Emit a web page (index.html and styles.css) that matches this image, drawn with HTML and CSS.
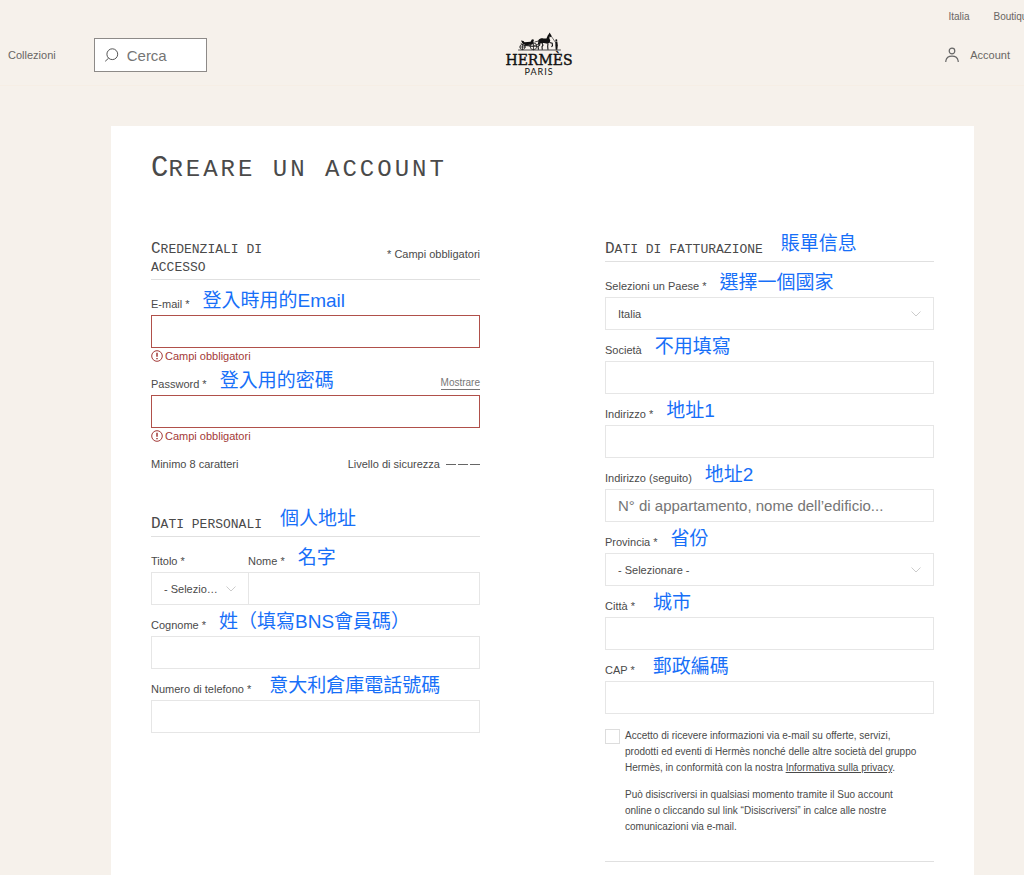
FILE: index.html
```html
<!DOCTYPE html>
<html lang="it">
<head>
    <meta charset="UTF-8">
    <meta name="viewport" content="width=device-width, initial-scale=1.0">
    <title>Creare un account</title>
    <link rel="stylesheet" href="styles.css">
</head>
<body>

    <header class="header">
        <nav class="top-links">
            <a href="#">Italia</a>
            <a href="#">Boutique</a>
        </nav>

        <div class="header-main">
            <div class="header-left">
                <a href="#">Collezioni</a>
                <label class="search">
                    <svg width="15" height="15" viewBox="0 0 15 15" fill="none" stroke="#555"><circle cx="8.3" cy="6.2" r="5.400"/><path d="M4.600 10.200 1.200 13.300"/></svg>
                    <input type="search" placeholder="Cerca" aria-label="Cerca">
                </label>
            </div>

            <a class="logo" href="#" aria-label="Hermès Paris">
                <svg width="70" height="46" viewBox="0 0 70 46">
                    <!-- carrozza -->
                    <g fill="none" stroke="#222" stroke-width="0.8" stroke-linecap="round">
                        <circle cx="18.500" cy="15" r="2.600"/>
                        <circle cx="29.500" cy="14.300" r="3.400"/>
                        <path d="M18.500 12.400v5.200M15.900 15h5.200M29.500 10.900v6.800M26.100 14.300h6.800"/>
                        <path d="M17 11.500l3 2h6M21 13.500l8 .8 7-3M14.500 18h42"/>
                        <path d="M31 10l5-1.500"/>
                    </g>
                    <path fill="#111" d="M17 8.500l2.500.5 1 1.200 6-.4 1.500-2.600 2 .6-1.400 4.600-7.100.8-3-1.700z"/>
                    <!-- cavallo -->
                    <path fill="#111" d="M34.500 8c1-1.600 3-1.900 5-1.600l3 .2 1.200-3.200 1.300-1.700.3-1.200.9 1 1.600 2.700-.8 1-1.400-.8-.2 2.200.9 1.800-.6 2.200-2.200 1.200-3.700-.8-3 .3-1.300-.5-.7 2-.9-.3z"/>
                    <path fill="none" stroke="#111" stroke-width="1.100" d="M36 10.500l-.3 2.500-1.700 1.700.5 3M37.800 10.500l1.200 2.600-1 1.600.3 3M44 11.500l-.3 3 .3 3.200M45.500 10.500l2.700.8.3 2.300-1 1.200"/>
                    <!-- palafreniere -->
                    <circle cx="52.300" cy="8.300" r="1" fill="#111"/>
                    <path fill="#111" d="M51.300 9.600h2l.5 3.600-.5 4.600h-1.600l-.3-4.400z"/>
                    <path fill="none" stroke="#222" stroke-width="0.600" d="M47.500 4.500l4 6"/>
                    <text class="logo-name" x="35" y="33" text-anchor="middle">HERMÈS</text>
                    <text class="logo-city" x="35" y="43" text-anchor="middle">PARIS</text>
                </svg>
            </a>

            <a class="account" href="#">
                <svg width="14" height="16" viewBox="0 0 14 16" fill="none" stroke="#666" stroke-width="1.200"><circle cx="7" cy="4" r="2.800"/><path d="M.8 15v-1C1.300 11 3.800 9.200 7 9.200s5.700 1.800 6.200 4.800v1"/></svg>
                Account
            </a>
        </div>
    </header>

    <main class="card">
        <h1>Creare un account</h1>

        <form class="columns">
            <div>
                <!-- credenziali -->
                <section class="section">
                    <div class="section-head">
                        <h2>Credenziali di accesso</h2>
                        <p class="required">* Campi obbligatori</p>
                    </div>
                    <div class="field error">
                        <div class="field-head">
                            <label for="email">E-mail *</label>
                            <span class="note">登入時用的Email</span>
                        </div>
                        <input type="email" id="email">
                        <p class="message">
                            <svg width="12" height="12" viewBox="0 0 12 12" fill="none" stroke="currentColor"><circle cx="6" cy="6" r="5.300"/><path stroke-width="1.500" d="M6 2.800v4M6 8v1.300"/></svg>
                            Campi obbligatori
                        </p>
                    </div>
                    <div class="field error">
                        <div class="field-head">
                            <label for="password">Password *</label>
                            <span class="note">登入用的密碼</span>
                            <button type="button" class="show">Mostrare</button>
                        </div>
                        <input type="password" id="password">
                        <p class="message">
                            <svg width="12" height="12" viewBox="0 0 12 12" fill="none" stroke="currentColor"><circle cx="6" cy="6" r="5.300"/><path stroke-width="1.500" d="M6 2.800v4M6 8v1.300"/></svg>
                            Campi obbligatori
                        </p>
                    </div>
                    <div class="hint">
                        <span>Minimo 8 caratteri</span>
                        <span class="security">Livello di sicurezza <i></i><i></i><i></i></span>
                    </div>
                </section>

                <!-- dati personali -->
                <section class="section">
                    <div class="section-head">
                        <h2>Dati personali</h2>
                        <span class="note">個人地址</span>
                    </div>
                    <div class="name-row">
                        <div class="field">
                            <div class="field-head"><label for="titolo">Titolo *</label></div>
                            <select id="titolo"><option>- Selezionare -</option></select>
                        </div>
                        <div class="field">
                            <div class="field-head">
                                <label for="nome">Nome *</label>
                                <span class="note">名字</span>
                            </div>
                            <input type="text" id="nome">
                        </div>
                    </div>
                    <div class="field">
                        <div class="field-head">
                            <label for="cognome">Cognome *</label>
                            <span class="note">姓（填寫BNS會員碼）</span>
                        </div>
                        <input type="text" id="cognome">
                    </div>
                    <div class="field">
                        <div class="field-head wide">
                            <label for="telefono">Numero di telefono *</label>
                            <span class="note">意大利倉庫電話號碼</span>
                        </div>
                        <input type="tel" id="telefono">
                    </div>
                </section>
            </div>

            <div>
                <!-- fatturazione -->
                <section class="section billing">
                    <div class="section-head">
                        <h2>Dati di fatturazione</h2>
                        <span class="note">賬單信息</span>
                    </div>
                    <div class="field">
                        <div class="field-head">
                            <label for="paese">Selezioni un Paese *</label>
                            <span class="note">選擇一個國家</span>
                        </div>
                        <select id="paese"><option>Italia</option></select>
                    </div>
                    <div class="field">
                        <div class="field-head">
                            <label for="societa">Società</label>
                            <span class="note">不用填寫</span>
                        </div>
                        <input type="text" id="societa">
                    </div>
                    <div class="field">
                        <div class="field-head">
                            <label for="indirizzo">Indirizzo *</label>
                            <span class="note">地址1</span>
                        </div>
                        <input type="text" id="indirizzo">
                    </div>
                    <div class="field">
                        <div class="field-head">
                            <label for="indirizzo2">Indirizzo (seguito)</label>
                            <span class="note">地址2</span>
                        </div>
                        <input type="text" id="indirizzo2" placeholder="N° di appartamento, nome dell’edificio...">
                    </div>
                    <div class="field">
                        <div class="field-head">
                            <label for="provincia">Provincia *</label>
                            <span class="note">省份</span>
                        </div>
                        <select id="provincia"><option>- Selezionare -</option></select>
                    </div>
                    <div class="field">
                        <div class="field-head wide">
                            <label for="citta">Città *</label>
                            <span class="note">城市</span>
                        </div>
                        <input type="text" id="citta">
                    </div>
                    <div class="field">
                        <div class="field-head wide">
                            <label for="cap">CAP *</label>
                            <span class="note">郵政編碼</span>
                        </div>
                        <input type="text" id="cap">
                    </div>
                    <div class="consent">
                        <input type="checkbox" id="consent">
                        <div>
                            <p><label for="consent">Accetto di ricevere informazioni via e-mail su offerte, servizi, prodotti ed eventi di Hermès nonché delle altre società del gruppo Hermès, in conformità con la nostra</label> <a href="#">Informativa sulla privacy</a>.</p>
                            <p>Può disiscriversi in qualsiasi momento tramite il Suo account online o cliccando sul link “Disiscriversi” in calce alle nostre comunicazioni via e-mail.</p>
                        </div>
                    </div>
                </section>
            </div>
        </form>
    </main>

</body>
</html>
```

FILE: styles.css
```css
* { box-sizing: border-box; }
body { margin: 0; background: #f6f1eb; color: #4a4a4a; font: 11px/16px "Liberation Sans", "Noto Sans CJK TC", sans-serif; overflow-x: hidden; }
h1, h2, p { margin: 0; font-weight: normal; }
a { color: inherit; text-decoration: none; }

/* header */
.header { color: #696663; border-bottom: 1px solid #f6eee5; }
.top-links { display: flex; justify-content: flex-end; gap: 24px; padding-top: 9px; margin-right: -9px; font-size: 10px; white-space: nowrap; }
.header-main { display: grid; grid-template-columns: 1fr auto 1fr; align-items: center; height: 60px; padding: 0 14px 0 8px; }
.header-left { display: flex; align-items: center; gap: 38px; }
.search { display: flex; align-items: center; gap: 8px; width: 113px; height: 34px; padding: 0 9px; background: #fff; border: 1px solid #8d8a88; }
.search svg { flex: none; }
.search input { width: 100%; min-width: 0; padding: 0; border: 0; outline: 0; background: none; font: 15px "Liberation Sans", sans-serif; }
.logo { padding-left: 59px; }
.logo svg { display: block; }
.logo-name { font: 14px "DejaVu Serif", serif; fill: #111; stroke: #111; stroke-width: 0.4px; }
.logo-city { font: 9px Lato, sans-serif; letter-spacing: 1px; fill: #111; }
.account { display: flex; align-items: center; justify-content: flex-end; gap: 11px; }

/* card */
.card { margin: 40px 50px 0 111px; padding: 28px 40px 60px; background: #fff; }
h1, h2 { font-family: "Liberation Mono", monospace; text-transform: uppercase; }
h1 { font-size: 24px; line-height: 32px; letter-spacing: 3px; }
h1::first-letter { font-size: 29px; line-height: 0; letter-spacing: 0; }
h2 { max-width: 50%; font-size: 13px; line-height: 18px; }
h2::first-letter { font-size: 16px; line-height: 0; }
.columns { display: grid; grid-template-columns: 1fr 1fr; gap: 125px; margin-top: 53px; }

.section + .section { margin-top: 42px; }
.section-head { display: flex; gap: 18px; margin-bottom: 4px; padding: 2px 0; border-bottom: 1px solid #e0e0e0; }
.section-head .note { margin: -11px 0 -4px; }
.required { margin: 5px 0 0 auto; }
.billing { padding-bottom: 26px; border-bottom: 1px solid #e0e0e0; }

/* fields */
.field-head { display: flex; align-items: flex-end; gap: 13px; height: 31px; white-space: nowrap; }
.field-head.wide { gap: 18px; }
.field-head label { line-height: 22px; }
.note { color: #176ff8; font-size: 19px; line-height: 28px; }
.field > input, select { display: block; width: 100%; height: 33px; padding: 0 12px; border: 1px solid #e6e6e6; border-radius: 0; background: #fff; color: #4a4a4a; font: 15px "Liberation Sans", sans-serif; }
select { appearance: none; padding-right: 26px; font-size: 11px; text-overflow: ellipsis; background: #fff url("data:image/svg+xml,%3Csvg xmlns='http://www.w3.org/2000/svg' width='10' height='6' fill='none' stroke='%23ccc'%3E%3Cpath d='M.5.5 5 5 9.500.5'/%3E%3C/svg%3E") no-repeat right 12px center; }
::placeholder { color: #757575; opacity: 1; }
.field.error > input { border-color: #b0504a; }
.message { display: flex; align-items: center; gap: 2px; color: #a33a38; }
.show { margin: 0 0 5px auto; padding: 0; border: 0; border-bottom: 1px solid #777; background: none; color: #777; font: 10px/12px "Liberation Sans", sans-serif; }
.hint { display: flex; justify-content: space-between; margin-top: 12px; }
.security { display: flex; align-items: center; gap: 2px; }
.security i { width: 10px; height: 1px; background: #666; }
.security i:first-of-type { margin-left: 4px; }
.name-row { display: grid; grid-template-columns: 97px 1fr; }
.name-row select { border-right: 0; }

.consent { display: flex; gap: 5px; margin-top: 14px; padding-right: 14px; font-size: 10px; }
.consent input { appearance: none; flex: none; width: 15px; height: 15px; margin: 1px 0 0; border: 1px solid #ddd; }
.consent p + p { margin-top: 11px; }
.consent a { text-decoration: underline; }
```
